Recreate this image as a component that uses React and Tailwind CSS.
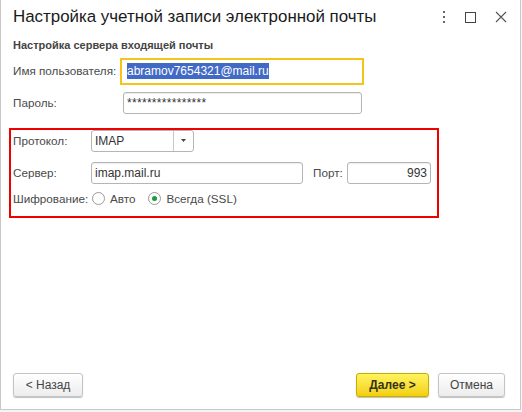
import React from "react";

const font = { fontFamily: '"Liberation Sans", Arial, sans-serif' };

function Field({ className = "", children }) {
  return (
    <div
      className={`h-[22px] flex items-center px-[3px] bg-white border border-[#b5b5b5] rounded-[3px] shadow-[inset_0_1px_1px_rgba(0,0,0,0.08)] text-[12px] text-[#333] ${className}`}
    >
      {children}
    </div>
  );
}

function Radio({ checked }) {
  return (
    <span className="w-[13px] h-[13px] rounded-full border border-[#9a9a9a] bg-white flex items-center justify-center">
      {checked && <span className="w-[5px] h-[5px] rounded-full bg-[#1e9b3c]" />}
    </span>
  );
}

function Button({ children, primary, className = "" }) {
  return (
    <button
      className={`h-[24px] rounded-[3px] text-[12px] flex items-center justify-center shadow-[0_1px_1px_rgba(0,0,0,0.25)] ${
        primary
          ? "bg-gradient-to-b from-[#fff35c] to-[#f2d000] border border-[#c9ac00] font-bold text-[#333318]"
          : "bg-gradient-to-b from-white to-[#ececec] border border-[#c4c4c4] text-[#444]"
      } ${className}`}
    >
      {children}
    </button>
  );
}

export default function App() {
  return (
    <div className="w-[522px] h-[412px] bg-[#f4f4f4]" style={font}>
      <div className="w-[521px] h-[410px] bg-white border-l border-r border-b border-[#c9c9c9] flex flex-col">
        {/* title bar */}
        <div className="h-[34px] flex items-center pl-[12px] pr-[13px]">
          <div className="text-[16.9px] text-[#1a1a1a] flex-1">
            Настройка учетной записи электронной почты
          </div>
          <div className="flex items-center gap-[19px] text-[#555]">
            <svg width="4" height="12" viewBox="0 0 4 12">
              <rect x="1" y="0" width="2" height="2" fill="#666" />
              <rect x="1" y="5" width="2" height="2" fill="#666" />
              <rect x="1" y="10" width="2" height="2" fill="#666" />
            </svg>
            <svg width="11" height="11" viewBox="0 0 11 11">
              <rect x="0.5" y="0.5" width="10" height="10" fill="none" stroke="#444" strokeWidth="1" />
            </svg>
            <svg width="12" height="12" viewBox="0 0 12 12">
              <path d="M1 1L11 11M11 1L1 11" stroke="#555" strokeWidth="1.1" />
            </svg>
          </div>
        </div>

        <div className="pl-[12px] mt-[3px] text-[11px] font-bold text-[#444]">
          Настройка сервера входящей почты
        </div>

        {/* username */}
        <div className="flex items-center mt-[4px] pl-[12px]">
          <div className="w-[107px] text-[11.7px] text-[#4a4a4a]">Имя пользователя:</div>
          <div className="w-[244px] h-[27px] border-[2px] border-[#f6c31c] flex items-center px-[5px] text-[12px]">
            <span className="bg-[#4169c6] text-white leading-[16px]">abramov7654321@mail.ru</span>
          </div>
        </div>

        {/* password */}
        <div className="flex items-center mt-[7px] pl-[12px]">
          <div className="w-[110px] text-[11.7px] text-[#4a4a4a]">Пароль:</div>
          <Field className="w-[239px] items-start pt-[1px] text-[10px] tracking-[0.3px]">****************</Field>
        </div>

        {/* red frame */}
        <div className="mt-[14px] ml-[8px] w-[430px] h-[90px] border-[2px] border-[#f00000] flex flex-col pl-[2px] text-[11.7px]">
          <div className="flex items-center">
            <div className="w-[78px] text-[#4a4a4a]">Протокол:</div>
            <div className="w-[103px] h-[22px] border border-[#b5b5b5] rounded-[3px] flex bg-white">
              <div className="flex-1 flex items-center px-[3px] text-[12px] text-[#333] border-r border-[#c8c8c8]">
                IMAP
              </div>
              <div className="w-[19px] flex items-center justify-center">
                <svg width="5" height="3" viewBox="0 0 5 3">
                  <path d="M0 0H5L2.5 3Z" fill="#444" />
                </svg>
              </div>
            </div>
          </div>
          <div className="flex items-center mt-[10px]">
            <div className="w-[78px] text-[#4a4a4a]">Сервер:</div>
            <Field className="w-[212px]">imap.mail.ru</Field>
            <div className="ml-[10px] w-[34px] text-[#4a4a4a]">Порт:</div>
            <Field className="w-[84px] justify-end">993</Field>
          </div>
          <div className="flex items-center mt-[6px] text-[#4a4a4a]">
            <div className="w-[79px]">Шифрование:</div>
            <Radio />
            <span className="ml-[5px]">Авто</span>
            <span className="ml-[13px]">
              <Radio checked />
            </span>
            <span className="ml-[5px]">Всегда (SSL)</span>
          </div>
        </div>

        <div className="flex-1" />

        {/* footer */}
        <div className="flex items-center pl-[12px] pb-[12px]">
          <Button className="w-[70px]">&lt; Назад</Button>
          <div className="flex-1" />
          <Button primary className="w-[73px]">Далее &gt;</Button>
          <Button className="w-[67px] ml-[9px] mr-[15px]">Отмена</Button>
        </div>
      </div>
    </div>
  );
}
